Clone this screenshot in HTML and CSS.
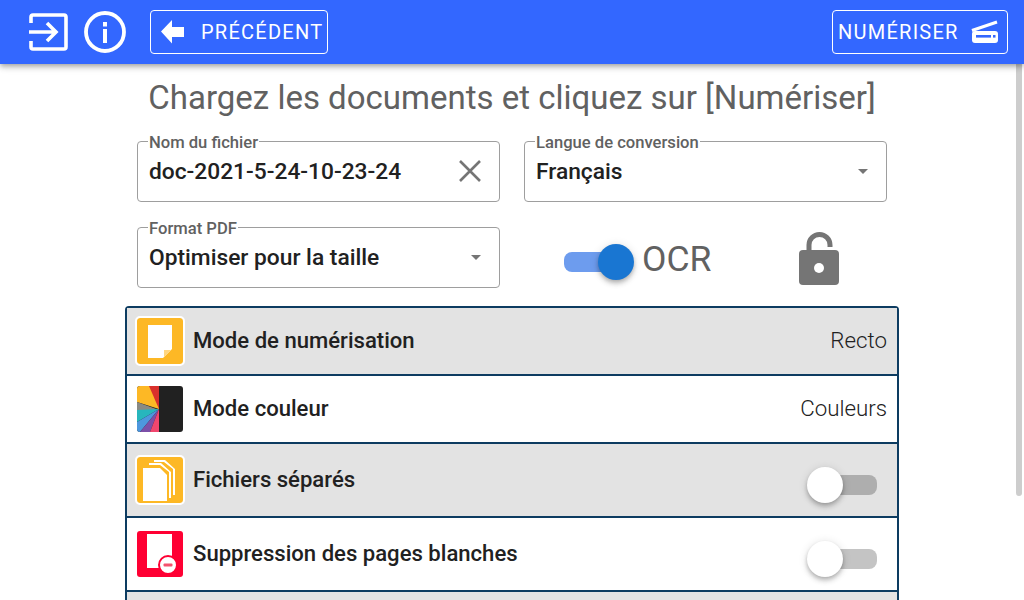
FILE: index.html
```html
<!DOCTYPE html>
<html lang="fr">
<head>
<meta charset="utf-8">
<title>Numériser</title>
<link rel="stylesheet" href="styles.css">
</head>
<body>
<header class="topbar">
  <svg class="icon-login" viewBox="0 0 40 38" width="40" height="38"><path d="M3 10V4a2 2 0 0 1 2-2h31a2 2 0 0 1 2 2v30a2 2 0 0 1-2 2H5a2 2 0 0 1-2-2v-6" fill="none" stroke="#fff" stroke-width="3.6"/><path d="M1 19h27M19 10l9 9-9 9" fill="none" stroke="#fff" stroke-width="3.6"/></svg>
  <svg class="icon-info" viewBox="0 0 42 42" width="42" height="42"><circle cx="21" cy="21" r="19" fill="none" stroke="#fff" stroke-width="3.8"/><rect x="19" y="18" width="4" height="14" fill="#fff"/><rect x="19" y="11" width="4" height="4.500" fill="#fff"/></svg>
  <button class="btn btn-prev">
    <svg viewBox="0 0 24 24" width="24" height="24"><path d="M0 11.500 11 0v7h12v10H11v6.500z" fill="#fff"/></svg>
    <span>PRÉCÉDENT</span>
  </button>
  <button class="btn btn-scan">
    <span>NUMÉRISER</span>
    <svg viewBox="0 0 28 24" width="28" height="24"><path d="M1 10.500 26 2" fill="none" stroke="#fff" stroke-width="3"/><rect x="1" y="11" width="26" height="12" rx="3" fill="#fff"/><rect x="5" y="15" width="15" height="2.600" fill="#3367ff"/><rect x="22" y="15" width="2.500" height="2.600" fill="#3367ff"/></svg>
  </button>
</header>

<main class="content">
  <h1 class="title">Chargez les documents et cliquez sur [Numériser]</h1>
  <div class="form-grid">
    <fieldset class="field">
      <legend>Nom du fichier</legend>
      <span class="value">doc-2021-5-24-10-23-24</span>
      <svg class="clear" viewBox="0 0 24 24" width="24" height="24"><path d="M2 2l20 20M22 2 2 22" stroke="#757575" stroke-width="2.600" fill="none"/></svg>
    </fieldset>
    <fieldset class="field">
      <legend>Langue de conversion</legend>
      <span class="value">Français</span>
      <i class="caret"></i>
    </fieldset>
    <fieldset class="field">
      <legend>Format PDF</legend>
      <span class="value">Optimiser pour la taille</span>
      <i class="caret"></i>
    </fieldset>
    <div class="ocr-cell">
      <div class="switch on"><i class="track"></i><i class="thumb"></i></div>
      <span class="ocr-label">OCR</span>
      <svg class="lock" viewBox="0 0 40 53" width="40" height="53"><path d="M10 20V13a10.500 10.500 0 0 1 21 0v2" fill="none" stroke="#757575" stroke-width="5"/><rect y="18" width="40" height="35" rx="4" fill="#757575"/><circle cx="20" cy="36" r="5" fill="#fff"/></svg>
    </div>
  </div>

  <div class="list">
    <div class="row shaded tall-a">
      <span class="tile tile-yellow framed">
        <svg viewBox="0 0 46 46" width="46" height="46"><path d="M11 7h24v24l-9 9H11z" fill="#fff"/><path d="M27 32h7l-7 7z" fill="#ffd680"/></svg>
      </span>
      <span class="label">Mode de numérisation</span>
      <span class="state">Recto</span>
    </div>
    <div class="row tall-a">
      <span class="tile tile-color">
        <svg viewBox="0 0 46 46" width="46" height="46">
          <rect width="46" height="46" fill="#212121"/>
          <path d="M22 0H0v16l22 7z" fill="#fdb825"/>
          <path d="M12 0h10v23z" fill="#d9302c"/>
          <path d="M0 16v8h22z" fill="#8a8a84"/>
          <path d="M0 24v12l22-13z" fill="#27b6bd"/>
          <path d="M0 36v10h3l19-23z" fill="#4d97de"/>
          <path d="M3 46h10l9-23z" fill="#7c4fa8"/>
          <path d="M13 46h9V23z" fill="#f0466e"/>
        </svg>
      </span>
      <span class="label">Mode couleur</span>
      <span class="state">Couleurs</span>
    </div>
    <div class="row shaded tall-b">
      <span class="tile tile-yellow framed">
        <svg viewBox="0 0 46 46" width="46" height="46"><path d="M17 3h11l10 9v26h-2V12l-9-7H17z" fill="#fff"/><path d="M12 6h12l10 9v26h-2V15l-9-7H12z" fill="#fff"/><path d="M6 11h17l7 7v26H6z" fill="#fff"/></svg>
      </span>
      <span class="label">Fichiers séparés</span>
      <div class="switch off dark"><i class="track"></i><i class="thumb"></i></div>
    </div>
    <div class="row tall-b">
      <span class="tile tile-red">
        <svg viewBox="0 0 46 46" width="46" height="46"><path d="M10 3h25v34H10z" fill="#fff"/><circle cx="31" cy="34" r="9" fill="#fff" stroke="#ff0033" stroke-width="2"/><rect x="26.500" y="32.500" width="9" height="3" rx="1" fill="#f4526d"/></svg>
      </span>
      <span class="label">Suppression des pages blanches</span>
      <div class="switch off"><i class="track"></i><i class="thumb"></i></div>
    </div>
    <div class="row shaded tall-b"></div>
  </div>
</main>
<div class="scrollbar"></div>
</body>
</html>
```
FILE: styles.css
```css
* { box-sizing: border-box; }
html, body { height: 100%; }
body {
  margin: 0;
  height: 600px;
  overflow: hidden;
  background: #fff;
  font-family: Roboto, "Liberation Sans", sans-serif;
  color: #212121;
  position: relative;
}
.topbar {
  height: 64px;
  background: #3367ff;
  display: flex;
  align-items: center;
  padding: 0 16px 0 28px;
  box-shadow: 0 2px 4px -1px rgba(0,0,0,.2), 0 4px 5px 0 rgba(0,0,0,.14), 0 1px 10px 0 rgba(0,0,0,.12);
  position: relative;
  z-index: 2;
}
.icon-info { margin-left: 16px; }
.btn {
  height: 44px;
  border: 1px solid #fff;
  border-radius: 4px;
  background: transparent;
  color: #fff;
  font: 400 20px Roboto, sans-serif;
  letter-spacing: 1.250px;
  display: flex;
  align-items: center;
  padding: 0;
}
.btn-prev { width: 178px; margin-left: 24px; padding-left: 10px; gap: 16px; }
.btn-scan { width: 176px; margin-left: auto; padding-left: 5px; gap: 12px; }
.content { width: 774px; margin: 0 auto; }
.title {
  margin: 14px 0 0;
  font-size: 33px;
  line-height: 40px;
  font-weight: 400;
  color: #616161;
  text-align: center;
}
.form-grid {
  display: grid;
  grid-template-columns: 363px 363px;
  column-gap: 24px;
  row-gap: 25px;
  margin: 23px 0 0 12px;
}
.field {
  margin: -11px 0 0;
  height: 72px;
  padding: 0 11px;
  border: 1px solid #9e9e9e;
  border-radius: 4px;
  display: flex;
  align-items: flex-start;
  justify-content: space-between;
  min-width: 0;
}
.field legend {
  font-size: 16.600px;
  font-weight: 500;
  line-height: 18px;
  color: #616161;
  padding: 4px 1px 0;
  margin-left: -1px;
}
.value { font-size: 22.750px; font-weight: 500; line-height: 28px; margin-top: 6px; }
.clear { margin: 7px 6px 0 0; }
.caret {
  width: 0; height: 0;
  border: 5px solid transparent;
  border-top-color: #757575;
  border-bottom-width: 0;
  margin: 17px 7px 0 0;
}
.ocr-cell { display: flex; align-items: center; padding-left: 40px; }
.ocr-label { font-size: 35.500px; color: #616161; margin: 2px 0 0 8px; }
.lock { margin-left: 88px; margin-top: 2px; }
.switch { position: relative; width: 70px; height: 42px; flex: none; margin-top: 8px; }
.track {
  position: absolute; left: 0; right: 0; top: 11px; height: 20px;
  width: 60px; border-radius: 8px; background: #c4c4c4;
}
.thumb {
  position: absolute; left: 0; top: 3px; width: 36px; height: 36px; border-radius: 50%;
  background: #fff;
  box-shadow: 0 2px 4px -1px rgba(0,0,0,.2), 0 4px 5px 0 rgba(0,0,0,.14), 0 1px 10px 0 rgba(0,0,0,.12);
}
.switch.on .track { background: #6d9cee; }
.switch.on .thumb { left: 34px; background: #1976d2; }
.switch.off { margin: 10px 10px 0 0; }
.switch.off .track { left: 10px; }
.switch.dark .track { background: #aeaeae; }
.list {
  margin-top: 18px;
  border: 2px solid #0d3c61;
  border-bottom: 0;
  border-radius: 4px 4px 0 0;
}
.row {
  display: flex;
  align-items: center;
  padding: 0 10px 0 10px;
  border-bottom: 2px solid #0d3c61;
}
.tall-a { height: 68px; }
.tall-b { height: 74px; }
.shaded { background: #e3e3e3; }
.tile {
  width: 46px; height: 46px; border-radius: 3px; overflow: hidden; flex: none; display: block;
}
.tile svg { display: block; }
.tile-yellow { background: #fdb825; }
.tile-red { background: #ff0033; }
.framed { outline: 2px solid #fff; }
.label { font-size: 22.100px; font-weight: 500; margin: 0 0 2px 10px; flex: 1; }
.state { font-size: 22.300px; font-weight: 300; color: #212121; margin-bottom: 2px; }
.scrollbar {
  position: absolute; right: 2px; top: 64px; width: 6px; height: 432px;
  background: #cdcdcd; border-radius: 0 0 3px 3px;
}
```
